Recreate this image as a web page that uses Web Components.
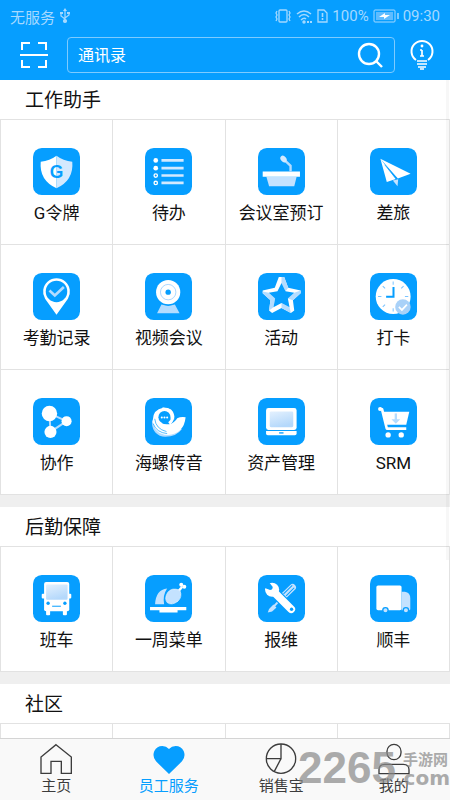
<!DOCTYPE html>
<html lang="zh-CN">
<head>
<meta charset="utf-8">
<meta name="viewport" content="width=device-width, initial-scale=1">
<title>员工服务</title>
<style>
  html, body { margin: 0; }
  body {
    font-family: Roboto, "Noto Sans CJK SC", sans-serif;
    color: #111;
    background: #fff;
    --blue: #069eff;
    --line: #e2e2e2;
  }
</style>
</head>
<body>
<work-app>
  <status-bar slot="header"></status-bar>
  <search-bar slot="header"></search-bar>

  <app-section heading="工作助手">
    <app-tile icon="shield">G令牌</app-tile>
    <app-tile icon="list">待办</app-tile>
    <app-tile icon="podium">会议室预订</app-tile>
    <app-tile icon="plane">差旅</app-tile>
    <app-tile icon="pin">考勤记录</app-tile>
    <app-tile icon="webcam">视频会议</app-tile>
    <app-tile icon="star">活动</app-tile>
    <app-tile icon="clock">打卡</app-tile>
    <app-tile icon="nodes">协作</app-tile>
    <app-tile icon="shell">海螺传音</app-tile>
    <app-tile icon="monitor">资产管理</app-tile>
    <app-tile icon="cart">SRM</app-tile>
  </app-section>
  <app-section heading="后勤保障">
    <app-tile icon="bus">班车</app-tile>
    <app-tile icon="chicken">一周菜单</app-tile>
    <app-tile icon="tools">报维</app-tile>
    <app-tile icon="truck">顺丰</app-tile>
  </app-section>
  <app-section heading="社区">
    <app-tile></app-tile><app-tile></app-tile><app-tile></app-tile><app-tile></app-tile>
  </app-section>

  <nav-item slot="nav" icon="home">主页</nav-item>
  <nav-item slot="nav" icon="heart" active>员工服务</nav-item>
  <nav-item slot="nav" icon="pie">销售宝</nav-item>
  <nav-item slot="nav" icon="user">我的</nav-item>
  <site-mark slot="mark"></site-mark>
</work-app>

<script>
const B = '#069eff', L = '#c4e2ff';
const tile = body => `<svg viewBox="0 0 140 140" aria-hidden="true"><defs><linearGradient id="g" x1="0" y1="0" x2="0.4" y2="1"><stop offset="0" stop-color="#e4f1fe"/><stop offset="1" stop-color="#b4d8fb"/></linearGradient></defs><rect width="140" height="140" rx="26" fill="${B}"/>${body}</svg>`;
const line = body => `<svg viewBox="0 0 96 96" aria-hidden="true" fill="none" stroke="currentColor" stroke-width="4">${body}</svg>`;

const ICONS = {
  shield: tile(`<path fill="#fff" d="M70 23Q50 38 23 41Q18 96 70 120Z"/><path fill="#d3e9fe" d="M70 23Q90 38 117 41Q122 96 70 120Z"/><text x="70" y="89" text-anchor="middle" font-family="Liberation Sans, sans-serif" font-weight="bold" font-size="52" fill="${B}">G</text>`),
  list: tile(`<g fill="#fff"><circle cx="32" cy="37" r="7"/><circle cx="32" cy="60" r="7"/></g><g fill="none" stroke="#fff" stroke-width="4"><circle cx="32" cy="82" r="5"/><circle cx="32" cy="104" r="5"/></g><path stroke="#d3e9fe" stroke-width="8" d="M49 37h66M49 60h66M49 82h66M49 104h66"/>`),
  podium: tile(`<path fill="${L}" d="M25 86H115L108 114H33Z"/><path fill="#fff" d="M14 70H125V86H14Z"/><path fill="none" stroke="#b4dcff" stroke-width="7" d="M80 37L97 53V70"/><ellipse cx="76" cy="33" rx="11" ry="8" transform="rotate(50 76 33)" fill="#d3e9fe"/>`),
  plane: tile(`<path fill="#fff" d="M31 32L50 101L77 92ZM31 32L121 77L83 91Z"/><path stroke="${B}" stroke-width="2" d="M44 50L79 94"/><path fill="${L}" d="M68 97L84 93L82 114Z"/>`),
  pin: tile(`<path fill="#fff" d="M70 124L36 77A40 40 0 1 1 104 77Z"/><circle cx="70" cy="55" r="32" fill="${B}"/><path fill="none" stroke="#b4dcff" stroke-width="8" d="M49 52L65 67L92 42"/>`),
  webcam: tile(`<path fill="#b4dcff" d="M49 94H89L103 120H36Z"/><circle cx="69" cy="57" r="41" fill="${B}"/><circle cx="69" cy="57" r="36" fill="#fff"/><circle cx="69" cy="57" r="23" fill="none" stroke="#9ccfff" stroke-width="2.500"/><circle cx="69" cy="57" r="8" fill="${B}"/>`),
  star: tile(`<path fill="#fff" d="M62 12H78L90 44L127 52V60L104 81L108 112L98 119L70 104L42 119L33 112L37 81L14 60V52L50 44Z"/><path fill="#b4dcff" d="M70 12H78L90 44L82 54L70 30ZM127 52V60L104 81L89 76L108 59ZM37 81L14 60V55L32 59L51 76L46 102L33 112ZM70 89V104L98 119L94 102Z"/><path fill="${B}" d="M70 30L82 54L108 59L89 76L94 102L70 89L46 102L51 76L32 59L58 54Z"/>`),
  clock: tile(`<circle cx="69" cy="70" r="52" fill="#fff"/><g stroke="#7cc4ff" stroke-width="3"><path d="M69 25v10M69 105v10M24 70h10M104 70h10M38 39l7 7M93 46l7-7M38 101l7-7"/></g><path fill="none" stroke="${B}" stroke-width="6" d="M70 42V71H48"/><circle cx="98" cy="101" r="23" fill="#a9d1f8"/><path fill="none" stroke="#fff" stroke-width="5" d="M86 101L95 110L110 94"/>`),
  nodes: tile(`<path fill="none" stroke="#b4dcff" stroke-width="6" d="M49 46L100 69L52 101Z"/><g fill="#fff"><circle cx="49" cy="46" r="23"/><circle cx="100" cy="69" r="15"/><circle cx="52" cy="101" r="18"/></g>`),
  shell: tile(`<path fill="#b4dcff" d="M21 66Q18 104 52 115Q92 118 110 92L60 90Z"/><path fill="#fff" d="M87 64Q88 30 54 29Q24 34 23 66Q26 108 68 110Q116 106 121 57Q106 55 96 60Q88 74 72 78Q58 80 48 74L76 60Z"/><circle cx="58" cy="57" r="18" fill="${B}"/><path fill="none" stroke="#fff" stroke-width="9" d="M52 33Q80 32 83 54Q82 68 72 76"/><path fill="none" stroke="${B}" stroke-width="2" d="M24 76Q34 103 66 106M29 62Q32 92 64 100"/><g fill="#fff"><circle cx="50" cy="58" r="3"/><circle cx="58" cy="58" r="3"/><circle cx="66" cy="58" r="3"/></g>`),
  monitor: tile(`<rect x="24" y="30" width="91" height="65" rx="7" fill="#fff"/><rect x="35" y="40" width="70" height="47" rx="4" fill="url(#g)"/><path fill="#fff" d="M24 98H115V106Q115 111 110 111H29Q24 111 24 106Z"/><path stroke="${B}" stroke-width="4" d="M63 104h13"/>`),
  cart: tile(`<path fill="none" stroke="#fff" stroke-width="8" stroke-linejoin="round" d="M29 32L36 34L50 91H108"/><circle cx="30" cy="33" r="6" fill="#fff"/><path fill="#fff" d="M38 41H117L108 80H48Z"/><path stroke="#b4dcff" stroke-width="7" d="M77 46V66"/><path fill="#b4dcff" d="M64 63H90L77 77Z"/><circle cx="54" cy="110" r="8" fill="#fff"/><circle cx="93" cy="110" r="8" fill="#fff"/>`),
  bus: tile(`<g fill="#fff"><rect x="33" y="21" width="75" height="87" rx="6"/><rect x="26" y="56" width="10" height="14" rx="3"/><rect x="104" y="56" width="10" height="14" rx="3"/><rect x="39" y="100" width="12" height="20" rx="3"/><rect x="89" y="100" width="12" height="20" rx="3"/></g><rect x="39" y="28" width="64" height="46" rx="3" fill="url(#g)"/><circle cx="45" cy="84" r="5" fill="${B}"/><circle cx="95" cy="84" r="5" fill="${B}"/><path stroke="${B}" stroke-width="3" d="M57 93h26"/>`),
  chicken: tile(`<path fill="${L}" d="M30 87Q32 44 66 40Q52 60 57 87Z"/><path stroke="#fff" stroke-width="7" d="M98 50L111 35"/><circle cx="108" cy="29" r="6" fill="#fff"/><circle cx="117" cy="35" r="6" fill="#fff"/><path fill="${L}" stroke="#e6f3ff" stroke-width="2" d="M104 46Q80 35 67 53Q57 70 66 82Q80 92 98 78Q112 65 104 46Z"/><path fill="#fff" d="M15 95H123V105H97V112H43V105H15Z"/>`),
  tools: tile(`<path stroke="${L}" stroke-width="6" d="M75 64L43 98"/><path fill="${L}" d="M46 88L55 97L42 109L29 112L33 101Z"/><path stroke="${L}" stroke-width="20" stroke-linecap="round" d="M103 37L76 63"/><path stroke="${B}" stroke-width="3" d="M102 31L76 56M108 38L84 62"/><path stroke="${B}" stroke-width="30" stroke-linecap="round" d="M56 59L99 102"/><path stroke="#fff" stroke-width="23" stroke-linecap="round" d="M46 49L99 102"/><circle cx="42" cy="44" r="21" fill="#fff"/><path fill="${B}" d="M18 30L30 18L44 36Q44 44 36 45L19 38Z"/><circle cx="100" cy="102" r="5" fill="${B}"/>`),
  truck: tile(`<rect x="19" y="31" width="75" height="74" rx="5" fill="#fff"/><path fill="${L}" d="M94 50H104Q120 52 120 70V101Q120 105 116 105H94Z"/><g fill="${L}" stroke="${B}" stroke-width="4"><circle cx="46" cy="105" r="8"/><circle cx="107" cy="105" r="8"/></g>`),
  home: line(`<path d="M48 5L94 42V91H64V55H33V91H3V42Z"/>`),
  heart: line(`<path fill="currentColor" stroke="none" d="M48 93L9 55Q-3 40 4 24Q12 9 28 9Q40 9 48 18Q56 9 68 9Q84 9 92 24Q99 40 87 55Z"/>`),
  pie: line(`<circle cx="48" cy="47" r="44"/><path d="M48 3V47H4M48 47L28 85"/>`),
  user: line(`<rect x="27" y="4" width="42" height="46" rx="21"/><path d="M3 92V80Q3 64 20 64H76Q93 64 93 80V92Z"/>`)
};

class WorkApp extends HTMLElement {
  constructor() {
    super();
    this.attachShadow({ mode: 'open' }).innerHTML = `
      <style>
        :host { display: flex; flex-direction: column; height: 100vh; position: relative; }
        header { background: var(--blue); color: #fff; }
        main { flex: 1; min-height: 0; overflow: hidden auto; scrollbar-width: none;
               display: flex; flex-direction: column; gap: 12px; background: #efefef; }
        .body { flex: 1; min-height: 0; display: flex; position: relative; }
        .thumb { position: absolute; right: 1px; top: 0; width: 3px; height: 73%;
                 background: rgba(0,0,0,.03); pointer-events: none; }
        nav { display: flex; border-top: 1px solid #d4d4d4; background: #f9f9f9; }
        ::slotted(nav-item) { flex: 1; }
      </style>
      <header><slot name="header"></slot></header>
      <div class="body"><main><slot></slot></main><span class="thumb"></span></div>
      <nav><slot name="nav"></slot></nav>
      <slot name="mark"></slot>`;
  }
}

class StatusBar extends HTMLElement {
  constructor() {
    super();
    this.attachShadow({ mode: 'open' }).innerHTML = `
      <style>
        :host { display: flex; align-items: center; gap: 4px; height: 32px; padding: 0 10px;
                font-size: 15px; color: #a5d9ff; }
        .grow { flex: 1; }
        svg { display: block; fill: none; stroke: currentColor; }
      </style>
      <span>无服务</span>
      <svg width="12" height="16" viewBox="0 0 12 16" stroke-width="1.200"><path d="M6 2V13M6 11L2 8V5M6 10L10 7V5"/><path fill="currentColor" stroke="none" d="M6 0L8 3H4ZM1 4h3v2H1ZM8 4h3v2H8Z"/><circle cx="6" cy="13" r="1.500" fill="currentColor"/></svg>
      <span class="grow"></span>
      <svg width="18" height="14" viewBox="0 0 18 14" stroke-width="1.300"><rect x="5" y="1" width="8" height="12" rx="1"/><path d="M3 2L2 4L3 6L2 8L3 10L2 12M15 2L16 4L15 6L16 8L15 10L16 12"/></svg>
      <svg width="17" height="15" viewBox="0 0 17 15" stroke-width="1.500"><path d="M1 5Q8 -1 15 5M3 8Q8 3 13 8M5 11Q8 8 10 10"/><circle cx="8" cy="13" r="1" fill="currentColor"/><path d="M11 13h2M14 13h2" stroke-width="2"/></svg>
      <svg width="11" height="14" viewBox="0 0 11 14" stroke-width="1.300"><path d="M1 1H7L10 4V13H1Z"/><path d="M5.500 4V8M5.500 9V11" stroke-width="1.600"/></svg>
      <span>100%</span>
      <svg width="26" height="14" viewBox="0 0 26 14"><rect x="1" y="1" width="21" height="12" rx="1"/><rect x="3" y="3" width="17" height="8" fill="#5fbcff" stroke="none"/><path fill="#fff" stroke="none" d="M6 8L12 4V6L17 6L11 10V8Z"/><path d="M25 4V10" stroke-width="1.500"/></svg>
      <span>09:30</span>`;
  }
}

class SearchBar extends HTMLElement {
  constructor() {
    super();
    this.attachShadow({ mode: 'open' }).innerHTML = `
      <style>
        :host { display: flex; align-items: center; padding: 5px 12px 7px; }
        button { border: 0; padding: 0; background: none; color: inherit; display: flex; justify-content: center; }
        .scan { width: 44px; margin-right: 11px; }
        .tip { width: 32px; margin-left: 11px; }
        form { flex: 1; min-width: 0; box-sizing: border-box; height: 36px; display: flex; align-items: center;
               padding: 0 10px; border: 1px solid #7ecbff; border-radius: 4px; }
        input { flex: 1; min-width: 0; border: 0; padding: 0; outline: 0; background: none; color: #fff; font: inherit; font-size: 16px; }
        input::placeholder { color: #fff; opacity: 1; }
        svg { display: block; fill: none; stroke: currentColor; }
      </style>
      <button class="scan" aria-label="扫一扫"><svg width="28" height="28" viewBox="0 0 28 28" stroke-width="2"><path d="M2 9V2H10M18 2H26V9M2 19V26H10M18 26H26V19M0 14H28"/></svg></button>
      <form role="search">
        <input type="search" placeholder="通讯录" aria-label="通讯录">
        <button type="button" aria-label="搜索"><svg width="28" height="28" viewBox="0 0 28 28" stroke-width="2.400"><circle cx="13" cy="13" r="10"/><path d="M20 20L26 26"/></svg></button>
      </form>
      <button class="tip" aria-label="提示"><svg width="26" height="32" viewBox="0 0 26 32" stroke-width="2"><path d="M7 21A10.500 10.500 0 1 1 19 21"/><path d="M13 11V17M11 11H13M11 17H15M8 22H18M8 25H18M9 28H17M11 30H15" stroke-width="1.700"/><circle cx="13" cy="7" r="1.400" fill="currentColor" stroke="none"/></svg></button>`;
  }
}

class AppSection extends HTMLElement {
  constructor() {
    super();
    this.attachShadow({ mode: 'open' }).innerHTML = `
      <style>
        :host { display: block; flex: none; background: #fff; }
        h2 { margin: 0; padding: 2px 25px 0; font-size: 19px; line-height: 37px; font-weight: 400; }
        .grid { display: grid; grid-template-columns: repeat(4, 1fr); border-top: 1px solid var(--line); border-left: 1px solid var(--line); }
      </style>
      <h2></h2><div class="grid"><slot></slot></div>`;
  }
  connectedCallback() {
    this.shadowRoot.querySelector('h2').textContent = this.getAttribute('heading');
  }
}

class AppTile extends HTMLElement {
  constructor() {
    super();
    this.attachShadow({ mode: 'open' }).innerHTML = `
      <style>
        :host { display: block; min-width: 0; }
        a { box-sizing: border-box; min-height: 125px; padding-top: 28px; display: flex; flex-direction: column; align-items: center; gap: 5px;
            border-right: 1px solid var(--line); border-bottom: 1px solid var(--line);
            color: inherit; text-decoration: none; font-size: 17px; line-height: 26px; white-space: nowrap; }
        svg { display: block; width: 47px; height: 47px; }
      </style>
      <a href="#"><slot></slot></a>`;
  }
  connectedCallback() {
    const art = ICONS[this.getAttribute('icon')];
    if (art) this.shadowRoot.querySelector('a').insertAdjacentHTML('afterbegin', art);
  }
}

class NavItem extends HTMLElement {
  constructor() {
    super();
    this.attachShadow({ mode: 'open' }).innerHTML = `
      <style>
        :host { display: block; color: #3c3c3c; }
        :host([active]) { color: var(--blue); }
        a { display: flex; flex-direction: column; align-items: center; gap: 1px; padding: 4px 0; color: inherit; text-decoration: none; font-size: 15px; line-height: 20px; }
        svg { display: block; width: 32px; height: 32px; }
      </style>
      <a href="#"><slot></slot></a>`;
  }
  connectedCallback() {
    this.shadowRoot.querySelector('a').insertAdjacentHTML('afterbegin', ICONS[this.getAttribute('icon')]);
  }
}

class SiteMark extends HTMLElement {
  constructor() {
    super();
    this.attachShadow({ mode: 'open' }).innerHTML = `
      <style>
        :host { position: absolute; right: 0; bottom: 12px; display: flex; align-items: flex-end; pointer-events: none;
                color: #8a8a8a; opacity: .7; font-weight: 700; }
        .num { font: 700 44px/40px "Liberation Sans", sans-serif; }
        .side { display: flex; flex-direction: column; align-items: flex-end; }
        .cn { font-size: 15px; line-height: 16px; padding-right: 2px; }
        .com { font: 700 20px/20px "DejaVu Sans", sans-serif; }
      </style>
      <span class="num">2265</span>
      <span class="side"><span class="cn">手游网</span><span class="com">.com</span></span>`;
  }
}

customElements.define('work-app', WorkApp);
customElements.define('status-bar', StatusBar);
customElements.define('search-bar', SearchBar);
customElements.define('app-section', AppSection);
customElements.define('app-tile', AppTile);
customElements.define('nav-item', NavItem);
customElements.define('site-mark', SiteMark);
</script>
</body>
</html>
